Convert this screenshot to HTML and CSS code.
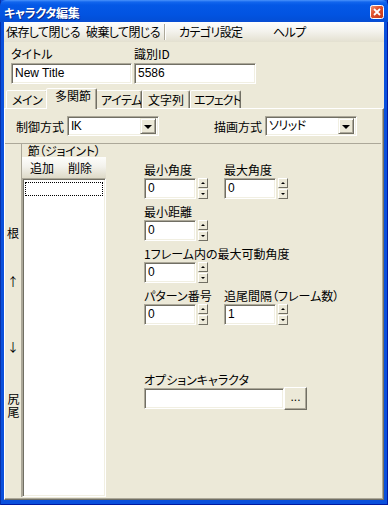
FILE: index.html
```html
<!DOCTYPE html>
<html lang="ja">
<head>
  <meta charset="UTF-8">
  <title>キャラクタ編集</title>
  <link rel="stylesheet" href="styles.css">
</head>
<body>

<div class="window">
  <div class="titlebar">
    <span class="title">キャラクタ編集</span>
    <span class="close-btn">
      <svg width="14" height="14" viewBox="0 0 14 14">
        <defs>
          <linearGradient id="closeGrad" x1="0" y1="0" x2="1" y2="1">
            <stop offset="0" stop-color="#f09a7c"/>
            <stop offset="0.4" stop-color="#e0522e"/>
            <stop offset="1" stop-color="#c1361a"/>
          </linearGradient>
        </defs>
        <rect x="0.5" y="0.5" width="13" height="13" rx="2" fill="url(#closeGrad)" stroke="#fff"/>
        <path d="M4 4 L10 10 M10 4 L4 10" stroke="#fff" stroke-width="1.8"/>
      </svg>
    </span>
  </div>

  <div class="client">
    <!-- menu -->
    <div class="menubar">
      <span class="menu-item save">保存して閉じる</span>
      <span class="menu-item discard">破棄して閉じる</span>
      <span class="menu-sep"></span>
      <span class="menu-item category">カテゴリ設定</span>
      <span class="menu-item">ヘルプ</span>
    </div>

    <!-- title / id -->
    <div class="head-fields">
      <div class="head-field">
        <div class="field-label">タイトル</div>
        <div class="textbox">New Title</div>
      </div>
      <div class="head-field id-field">
        <div class="field-label">識別ID</div>
        <div class="textbox">5586</div>
      </div>
    </div>

    <!-- tabs -->
    <div class="tabs">
      <div class="tab tab-main">メイン</div>
      <div class="tab active">多関節</div>
      <div class="tab tab-item">アイテム</div>
      <div class="tab tab-text">文字列</div>
      <div class="tab tab-effect">エフェクト</div>
    </div>

    <div class="tab-panel">
      <div class="mode-row">
        <span class="mode-label">制御方式</span>
        <div class="combo"><span class="combo-text">IK</span><span class="combo-btn"></span></div>
        <span class="mode-label draw-label">描画方式</span>
        <div class="combo"><span class="combo-text">ソリッド</span><span class="combo-btn"></span></div>
      </div>

      <div class="joint-area">
        <div class="chain-labels">
          <span class="chain root">根</span>
          <span class="chain up">↑</span>
          <span class="chain down">↓</span>
          <span class="chain tail">尻尾</span>
        </div>

        <div class="joint-list">
          <div class="joint-header">節（ジョイント）</div>
          <div class="joint-toolbar">
            <span class="tool">追加</span>
            <span class="tool">削除</span>
          </div>
          <div class="listbox">
            <div class="list-focus"></div>
          </div>
        </div>

        <div class="joint-props">
          <div class="prop-row">
            <div class="prop">
              <div class="field-label">最小角度</div>
              <div class="spinbox"><div class="textbox num">0</div><div class="spin"><span class="spin-up"></span><span class="spin-down"></span></div></div>
            </div>
            <div class="prop">
              <div class="field-label">最大角度</div>
              <div class="spinbox"><div class="textbox num">0</div><div class="spin"><span class="spin-up"></span><span class="spin-down"></span></div></div>
            </div>
          </div>
          <div class="prop-row">
            <div class="prop">
              <div class="field-label">最小距離</div>
              <div class="spinbox"><div class="textbox num">0</div><div class="spin"><span class="spin-up"></span><span class="spin-down"></span></div></div>
            </div>
          </div>
          <div class="prop-row">
            <div class="prop">
              <div class="field-label">1フレーム内の最大可動角度</div>
              <div class="spinbox"><div class="textbox num">0</div><div class="spin"><span class="spin-up"></span><span class="spin-down"></span></div></div>
            </div>
          </div>
          <div class="prop-row">
            <div class="prop">
              <div class="field-label">パターン番号</div>
              <div class="spinbox"><div class="textbox num">0</div><div class="spin"><span class="spin-up"></span><span class="spin-down"></span></div></div>
            </div>
            <div class="prop">
              <div class="field-label">追尾間隔（フレーム数）</div>
              <div class="spinbox"><div class="textbox num">1</div><div class="spin"><span class="spin-up"></span><span class="spin-down"></span></div></div>
            </div>
          </div>
          <div class="prop-row option-row">
            <div class="prop">
              <div class="field-label">オプションキャラクタ</div>
              <div class="option-box"><div class="textbox option-text"></div><span class="browse-btn">...</span></div>
            </div>
          </div>
        </div>
      </div>
    </div>
  </div>
</div>

</body>
</html>
```

FILE: styles.css
```css
:root {
  --face: #ece9d8;
  --shadow: #aca899;
  --dark: #716f64;
  --light: #f1efe2;
  --xp-blue: #0a50dc;
}

body {
  margin: 0;
  font-family: "Noto Sans CJK JP", "Liberation Sans", sans-serif;
  font-size: 12px;
  font-feature-settings: "palt";
  color: #000;
  background: #fff;
}

/* Window frame */
.window {
  width: 388px;
  height: 505px;
  box-sizing: border-box;
  display: flex;
  flex-direction: column;
  background: var(--xp-blue);
  box-shadow: inset 1px 0 #0831a8, inset -1px 0 #0019a0, inset 0 -1px #0019a0;
}

.titlebar {
  height: 22px;
  flex: none;
  display: flex;
  align-items: flex-start;
  justify-content: space-between;
  padding: 0 4px 0 4px;
  background: linear-gradient(#4a93fb 0, #1266ee 2px, #0458e6 5px, #0254e2 14px, #0250da 19px, #0a4dd2 22px);
  border-radius: 6px 6px 0 0;
}

.title {
  color: #fff;
  font-weight: bold;
  font-size: 12px;
  line-height: 18px;
  margin-top: 4px;
  letter-spacing: -0.3px;
  text-shadow: 1px 1px #0a2a8a;
}

.close-btn {
  display: flex;
  margin-top: 5px;
}

.client {
  flex: 1;
  margin: 0 4px 5px 4px;
  background: var(--face);
  display: flex;
  flex-direction: column;
}

/* Menu */
.menubar {
  height: 20px;
  flex: none;
  display: flex;
  align-items: center;
  padding-left: 2px;
  background: linear-gradient(#fefefd, #f4f3ee 45%, #e3e0d0);
  line-height: 20px;
  white-space: nowrap;
  letter-spacing: -0.6px;
}

.menu-item.save { width: 80px; }
.menu-item.discard { width: 78px; }
.menu-item.category { width: 94px; }

.menu-sep {
  width: 1px;
  height: 16px;
  background: var(--shadow);
  border-right: 1px solid #fff;
  margin-right: 13px;
}

/* Title / ID */
.head-fields {
  height: 44px;
  flex: none;
  display: flex;
  gap: 2px;
  padding: 5px 0 0 7px;
  box-sizing: border-box;
}

.head-field {
  width: 121px;
}

.id-field {
  width: 122px;
}

.field-label {
  line-height: 14px;
  height: 14px;
  white-space: nowrap;
}

.head-field .field-label {
  margin-bottom: 2px;
}

.textbox {
  height: 21px;
  box-sizing: border-box;
  background: #fff;
  border: 1px solid;
  border-color: var(--shadow) #fff #fff var(--shadow);
  box-shadow: inset 1px 1px var(--dark), inset -1px -1px var(--light);
  padding-left: 3px;
  line-height: 19px;
  white-space: nowrap;
  font-family: "Liberation Sans", "Noto Sans CJK JP", sans-serif;
}

/* Tabs */
.tabs {
  height: 22px;
  flex: none;
  display: flex;
  align-items: flex-end;
  padding-left: 2px;
  position: relative;
  z-index: 1;
  white-space: nowrap;
}

.tab {
  height: 18px;
  box-sizing: border-box;
  padding-left: 5px;
  line-height: 17px;
  border: 1px solid;
  border-bottom: none;
  border-color: #fff var(--dark) transparent #fff;
  border-radius: 2px 2px 0 0;
  box-shadow: inset -1px 0 var(--shadow);
  background: var(--face);
  overflow: hidden;
}

.tab-main { width: 42px; letter-spacing: -0.5px; }
.tab-item { width: 47px; letter-spacing: -0.4px; }
.tab-text { width: 48px; }
.tab-effect { width: 51px; letter-spacing: -0.9px; padding-left: 3px; }

.tab.active {
  width: 51px;
  height: 21px;
  margin: 0 -2px -1px -2px;
  padding-left: 8px;
  line-height: 14px;
  position: relative;
}

.tab-panel {
  flex: 1;
  display: flex;
  flex-direction: column;
  border: 1px solid;
  border-color: #fff var(--dark) var(--dark) #fff;
  box-shadow: inset -1px -1px var(--shadow);
}

/* Mode row */
.mode-row {
  height: 34px;
  flex: none;
  display: flex;
  align-items: center;
  padding-left: 11px;
  border-bottom: 1px solid var(--shadow);
  margin-right: 2px;
}

.mode-label {
  margin-right: 3px;
}

.draw-label {
  margin-left: 55px;
}

.combo {
  width: 92px;
  height: 20px;
  box-sizing: border-box;
  display: flex;
  align-items: center;
  justify-content: space-between;
  background: #fff;
  border: 1px solid;
  border-color: var(--shadow) #fff #fff var(--shadow);
  box-shadow: inset 1px 1px var(--dark), inset -1px -1px var(--light);
  padding: 1px 2px 1px 3px;
}

.combo-text {
  line-height: 16px;
  font-family: "Liberation Sans", "Noto Sans CJK JP", sans-serif;
  letter-spacing: -0.5px;
}

.combo-btn {
  width: 16px;
  height: 16px;
  box-sizing: border-box;
  background: var(--face);
  border: 1px solid;
  border-color: var(--light) var(--dark) var(--dark) var(--light);
  box-shadow: inset 1px 1px #fff, inset -1px -1px var(--shadow);
  display: flex;
  align-items: center;
  justify-content: center;
}

.combo-btn::after {
  content: "";
  border-left: 4px solid transparent;
  border-right: 4px solid transparent;
  border-top: 4px solid #000;
  margin-top: 1px;
}

/* Joint area */
.joint-area {
  flex: 1;
  display: flex;
}

.chain-labels {
  width: 16px;
  display: flex;
  flex-direction: column;
  align-items: center;
  line-height: 13px;
}

.chain.root { margin-top: 82px; }
.chain.up { margin-top: 36px; }
.chain.down { margin-top: 52px; }

.chain.tail {
  margin-top: 40px;
  writing-mode: vertical-rl;
  text-orientation: upright;
  letter-spacing: 1px;
  line-height: 16px;
}

.joint-list {
  width: 84px;
  display: flex;
  flex-direction: column;
  border-left: 1px solid var(--shadow);
  margin-bottom: 2px;
}

.joint-header {
  height: 13px;
  line-height: 13px;
  text-align: center;
  white-space: nowrap;
  letter-spacing: -0.3px;
}

.joint-toolbar {
  height: 21px;
  display: flex;
  align-items: center;
  padding-left: 8px;
  gap: 14px;
  background: linear-gradient(#fdfdfb, #f3f2ec 45%, #dedac8);
}

.listbox {
  flex: 1;
  background: #fff;
  border: 1px solid;
  border-color: var(--shadow) #fff #fff var(--shadow);
  box-shadow: inset 1px 1px var(--dark), inset -1px -1px var(--light);
  padding: 3px 2px 0 2px;
}

.list-focus {
  height: 12px;
  border: 1px dotted #000;
}

/* Properties */
.joint-props {
  flex: 1;
  padding: 19px 0 0 38px;
}

.prop-row {
  display: flex;
  margin-bottom: 6px;
}

.prop {
  width: 80px;
}

.prop .field-label {
  margin-bottom: 1px;
}

.spinbox {
  display: flex;
  gap: 2px;
}

.textbox.num {
  width: 52px;
}

.spin {
  width: 10px;
  height: 21px;
  display: flex;
  flex-direction: column;
  gap: 1px;
}

.spin span {
  flex: 1;
  box-sizing: border-box;
  background: var(--face);
  border: 1px solid;
  border-color: #fff var(--dark) var(--dark) #fff;
  display: flex;
  align-items: center;
  justify-content: center;
}

.spin-up::after {
  content: "";
  border-left: 2px solid transparent;
  border-right: 2px solid transparent;
  border-bottom: 2px solid #000;
}

.spin-down::after {
  content: "";
  border-left: 2px solid transparent;
  border-right: 2px solid transparent;
  border-top: 2px solid #000;
}

.option-row {
  margin-top: 48px;
}

.option-box {
  display: flex;
  align-items: center;
  width: 163px;
  margin-top: -1px;
}

.option-text {
  width: 140px;
}

.browse-btn {
  width: 23px;
  height: 23px;
  box-sizing: border-box;
  background: var(--face);
  border: 1px solid;
  border-color: #fff var(--dark) var(--dark) #fff;
  box-shadow: inset -1px -1px var(--shadow);
  text-align: center;
  line-height: 19px;
  font-family: "Liberation Sans", sans-serif;
}
```
